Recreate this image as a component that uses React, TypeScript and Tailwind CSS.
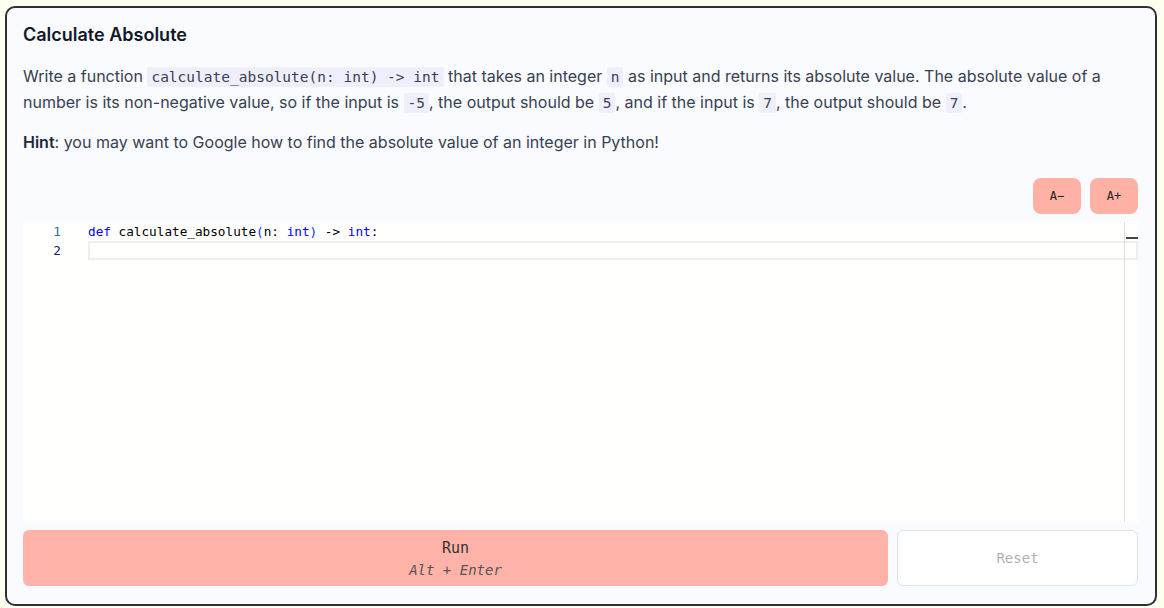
import React from "react";

const C = ({ children }: { children: React.ReactNode }) => (
  <code className="bg-[#efeffc] px-[4px] py-[2px] rounded-[2px] text-[14.5px] text-[#374151] [font-family:'DejaVu_Sans_Mono',monospace]">
    {children}
  </code>
);

export default function App() {
  return (
    <div className="w-[1164px] h-[608px] bg-[#fffff0] pt-[6px] px-[5px] [font-family:Inter,sans-serif]">
      <div className="w-[1152px] h-[600px] border-2 border-[#2d3135] rounded-[10px] bg-[#f9fbff] pl-[16px] pr-[17px] pt-[16px] flex flex-col">
        <h1 className="text-[18px] font-semibold text-[#111827] leading-[24px] -mt-[1px]">Calculate Absolute</h1>
        <p className="mt-[17px] text-[16px] leading-[25px] text-[#374151]">
          Write a function <C>calculate_absolute(n: int) -&gt; int</C> that takes an integer <C>n</C> as input and returns its absolute value. The absolute value of a number is its non-negative value, so if the input is <C>-5</C>, the output should be <C>5</C>, and if the input is <C>7</C>, the output should be <C>7</C>.
        </p>
        <p className="mt-[14px] text-[16px] leading-[25px] text-[#374151]">
          <span className="font-semibold text-[#1f2937]">Hint</span>: you may want to Google how to find the absolute value of an integer in Python!
        </p>
        <div className="flex justify-end gap-[9px] mt-[23px]">
          <button className="w-[48px] h-[36px] rounded-[8px] bg-[#ffb1a5] text-[12px] text-[#222] [font-family:'DejaVu_Sans_Mono',monospace]">A−</button>
          <button className="w-[48px] h-[36px] rounded-[8px] bg-[#ffb1a5] text-[12px] text-[#222] [font-family:'DejaVu_Sans_Mono',monospace]">A+</button>
        </div>
        <div className="mt-[8px] h-[300px] bg-[#fffffe] relative flex">
          <div className="w-[65px] text-right pr-[27px] text-[12.7px] leading-[19px] [font-family:'DejaVu_Sans_Mono',monospace]">
            <div className="text-[#237893]">1</div>
            <div className="text-[#0b216f]">2</div>
          </div>
          <div className="flex-1 text-[12.7px] leading-[19px] [font-family:'DejaVu_Sans_Mono',monospace] whitespace-pre">
            <div className="h-[19px] text-[#000]">
              <span className="text-[#0000ff]">def</span> calculate_absolute<span className="text-[#0431fa]">(</span>n: <span className="text-[#0000ff]">int</span><span className="text-[#0431fa]">)</span> -&gt; <span className="text-[#0000ff]">int</span>:
            </div>
            <div className="h-[19px] border-2 border-[#eeeeee]"></div>
          </div>
          <div className="absolute right-[13px] top-0 bottom-0 w-px bg-[#dddddd]"></div>
          <div className="absolute right-0 top-[15px] w-[12px] h-[2px] bg-[#444]"></div>
        </div>
        <div className="flex gap-[9px] mt-[8px]">
          <button className="flex-1 h-[56px] pt-[2px] rounded-[6px] bg-[#ffb3a8] flex flex-col items-center justify-center [font-family:'DejaVu_Sans_Mono',monospace]">
            <span className="text-[15px] text-[#333] leading-[18px]">Run</span>
            <span className="text-[14px] italic text-[#555] leading-[18px] mt-[4px]">Alt + Enter</span>
          </button>
          <button className="w-[241px] h-[56px] rounded-[6px] bg-white border border-[#dbe4ee] text-[14px] text-[#b0b0b0] [font-family:'DejaVu_Sans_Mono',monospace]">
            Reset
          </button>
        </div>
      </div>
    </div>
  );
}
